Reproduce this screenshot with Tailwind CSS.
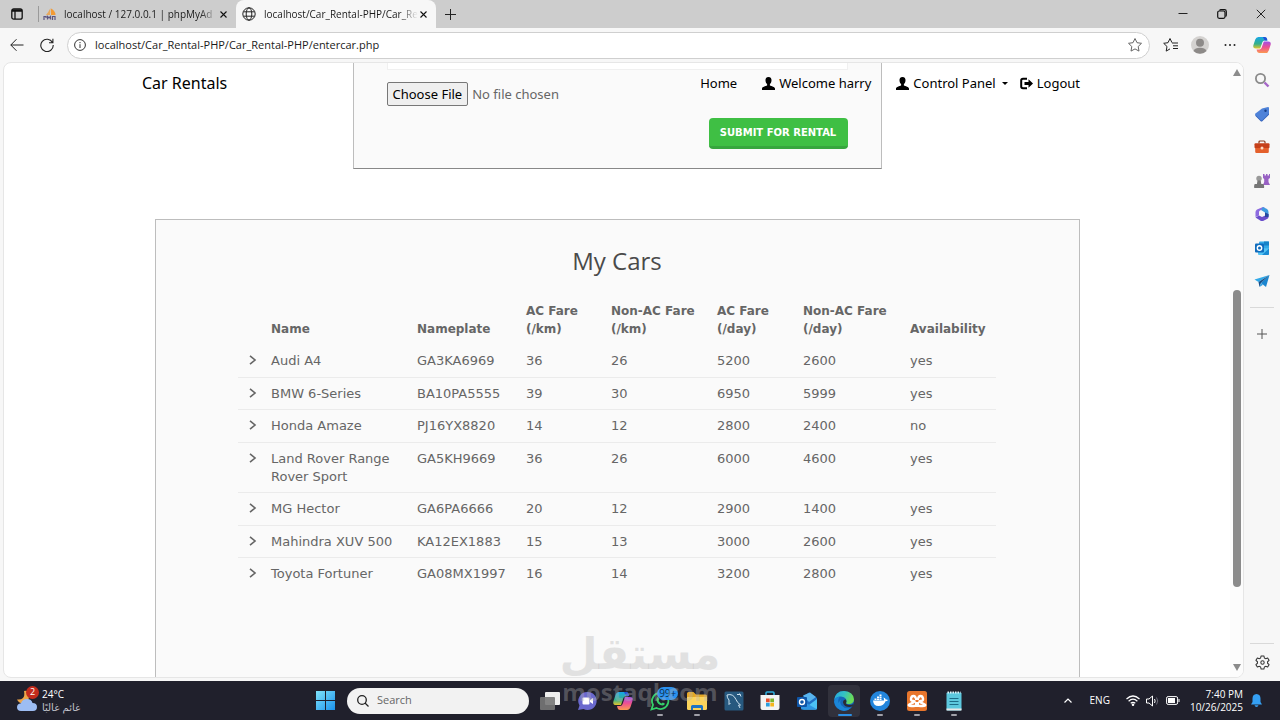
<!DOCTYPE html>
<html lang="en">
<head>
    <meta charset="UTF-8">
    <meta name="viewport" content="width=device-width, initial-scale=1.0">
    <title>Car Rentals</title>
    <script src="https://cdn.jsdelivr.net/npm/@tailwindcss/browser@4"></script>
</head>
<body class="relative flex h-screen flex-col overflow-hidden bg-[#f7f7f7] font-['Open_Sans','Noto_Sans',sans-serif] text-[#1b1b1b]">

    <!-- Tab strip -->
    <div class="flex h-7 shrink-0 bg-[#cdcdcd] text-[10px]">
        <button aria-label="Tab actions" class="flex w-[34px] items-center justify-center">
            <svg class="size-3" viewBox="0 0 12 12" fill="none" stroke="#111" stroke-width="1.3"><rect x=".8" y=".8" width="10.4" height="10.4" rx="2"/><path d="M1 2h10M1 3h10M4 3v8" /></svg>
        </button>
        <div class="my-1.5 ml-1 w-px bg-[#9a9a9a]"></div>
        <div class="flex w-[197px] items-center pl-1">
            <svg class="h-3 w-3.5 shrink-0" viewBox="0 0 14 12"><path d="M7.500 0Q5.500 4 3 7h4z" fill="#e8a85c"/><path d="M8 .5Q12.500 3 12.500 7H8z" fill="#f29a35"/><path d="M1 12V8.500h2V10m1.500 1.500v-3L6 10l1.500-1.500v3M9.500 12V8.500H12V12" fill="none" stroke="#5c5580" stroke-width="1.2"/></svg>
            <button class="ml-[7px] w-[154px] overflow-hidden text-left whitespace-nowrap [mask-image:linear-gradient(to_right,black_88%,transparent)]">localhost / 127.0.0.1 | phpMyAd</button>
            <button aria-label="Close tab" class="ml-0.5"><svg class="size-[7px]" viewBox="0 0 7 7" stroke="#111" stroke-width="1.1"><path d="M.5.5l6 6m0-6l-6 6"/></svg></button>
        </div>
        <div class="flex w-[200px] items-center rounded-t-lg bg-[#f7f7f7] pl-1.5">
            <svg class="size-[14px] shrink-0" viewBox="0 0 14 14" fill="none" stroke="#222"><circle cx="7" cy="7" r="6.200"/><ellipse cx="7" cy="7" rx="2.800" ry="6.200"/><path d="M1.500 4.800h11M1.500 9.200h11"/></svg>
            <button class="ml-2 w-[154px] overflow-hidden text-left whitespace-nowrap [mask-image:linear-gradient(to_right,black_88%,transparent)]">localhost/Car_Rental-PHP/Car_Re</button>
            <button aria-label="Close tab" class="ml-0.5"><svg class="size-[7px]" viewBox="0 0 7 7" stroke="#111" stroke-width="1.1"><path d="M.5.5l6 6m0-6l-6 6"/></svg></button>
        </div>
        <button aria-label="New tab" class="ml-[9px]"><svg class="size-[11px]" viewBox="0 0 11 11" stroke="#222"><path d="M5.500 0v11M0 5.500h11"/></svg></button>
        <div class="ml-auto flex items-center gap-[29px] pr-[14px]">
            <button aria-label="Minimize"><svg class="size-[10px]" viewBox="0 0 10 10" stroke="#222"><path d="M.5 4.500h9"/></svg></button>
            <button aria-label="Restore"><svg class="size-[10px]" viewBox="0 0 10 10" fill="none" stroke="#111" stroke-width="1.2"><rect x=".7" y="2" width="7.300" height="7.300" rx="1.500"/><path d="M2.500 1.500Q3 .7 4 .7h3.500q1.800 0 1.800 1.800V6q0 1-.8 1.500"/></svg></button>
            <button aria-label="Close"><svg class="size-[10px]" viewBox="0 0 10 10" stroke="#222"><path d="M.8.8l8.400 8.400m0-8.400L.8 9.200"/></svg></button>
        </div>
    </div>

    <!-- Address bar -->
    <div class="flex h-[34px] shrink-0 items-center pr-[9px] pl-2.5">
        <button aria-label="Back"><svg class="size-[14px]" viewBox="0 0 14 14" fill="none" stroke="#222"><path d="M13.500 7H.8M6.500 1.200L.8 7l5.700 5.800"/></svg></button>
        <button aria-label="Refresh" class="ml-4"><svg class="size-[14px]" viewBox="0 0 14 14" fill="none" stroke="#222" stroke-width="1.1"><path d="M12.500 4.500A6.200 6.200 0 1 0 13.200 7M12.900.8v3.900H9"/></svg></button>
        <div class="ml-[13px] flex h-[27px] flex-1 items-center rounded-full border border-[#cfcfcf] bg-white px-1.5">
            <svg class="size-3 shrink-0" viewBox="0 0 12 12" fill="none" stroke="#333"><circle cx="6" cy="6" r="5.400"/><path d="M6 5.200V9M6 3v1.200"/></svg>
            <input aria-label="Address" class="ml-[9px] min-w-0 flex-1 text-[11px] outline-none" value="localhost/Car_Rental-PHP/Car_Rental-PHP/entercar.php">
            <button aria-label="Add to favorites"><svg class="size-4" viewBox="0 0 16 16" fill="none" stroke="#666" stroke-linejoin="round"><path d="M8 1.500l2 4.200 4.500.6-3.300 3.200.8 4.600L8 11.900l-4 2.200.8-4.600L1.500 6.300 6 5.700z"/></svg></button>
        </div>
        <button aria-label="Favorites" class="ml-[13px]"><svg class="size-4" viewBox="0 0 16 16" fill="none" stroke="#222" stroke-linejoin="round"><path d="M9 5.500h-.1L7 1.500 5 5.700.7 6.300 4 9.500l-.8 4.600L7 11.900M9 6h6M10 8.800h5M10 11.500h5"/></svg></button>
        <button aria-label="Profile" class="ml-3"><svg class="size-[18px]" viewBox="0 0 18 18"><circle cx="9" cy="9" r="9" fill="#d4d2d0"/><circle cx="9" cy="6.800" r="4" fill="#8d8a88"/><path d="M2.500 15Q4 11.800 9 11.800t6.500 3.200A9 9 0 0 1 2.500 15z" fill="#8d8a88"/></svg></button>
        <button aria-label="Settings and more" class="ml-[15px]"><svg class="h-1 w-3" viewBox="0 0 12 4" fill="#222"><circle cx="1.500" cy="2" r="1"/><circle cx="6" cy="2" r="1"/><circle cx="10.500" cy="2" r="1"/></svg></button>
        <button aria-label="Copilot" class="ml-[17px]">
            <svg class="size-[18px]" viewBox="0 0 20 20">
                <defs>
                    <linearGradient id="cpa" x1="0" y1="0" x2="0" y2="1"><stop offset="0" stop-color="#16a6e8"/><stop offset=".6" stop-color="#35b08a"/><stop offset="1" stop-color="#e8c52a"/></linearGradient>
                    <linearGradient id="cpb" x1="0" y1="0" x2="0" y2="1"><stop offset="0" stop-color="#a04ee8"/><stop offset=".5" stop-color="#ee5190"/><stop offset="1" stop-color="#fb9a50"/></linearGradient>
                </defs>
                <path d="M6 1h7q2 0 2.500 2l.5 2h-3q-2 0-2.600 2L8 14H3Q-.6 14 .5 10L2.500 4Q3.500 1 6 1z" fill="url(#cpa)"/>
                <path d="M11 1h2q2 0 2.500 2l.5 2h-3z" fill="#2450d8"/>
                <path d="M14 19H7q-2 0-2.500-2L4 15h3q2 0 2.600-2L12 6h5q3.600 0 2.500 4l-2 6q-1 3-3.500 3z" fill="url(#cpb)"/>
            </svg>
        </button>
    </div>

    <div class="flex min-h-0 flex-1">
        <!-- Web page -->
        <div class="mb-[3px] ml-[3px] flex min-w-0 flex-1 overflow-hidden rounded-lg border border-[#e6e6e6] bg-white font-['DejaVu_Sans',sans-serif] text-[#666]">
            <div class="relative flex min-w-0 flex-1 flex-col items-center">
                <nav class="absolute inset-x-0 top-0 z-10 flex justify-center text-[13px] leading-[18px] text-black font-['Noto_Sans',sans-serif]">
                    <div class="flex w-full max-w-[950px] items-center pt-[11px] pr-3">
                        <a href="#" class="text-base leading-[18px]">Car Rentals</a>
                        <div class="ml-auto flex items-center gap-[25px]">
                            <a href="#">Home</a>
                            <a href="#" class="flex items-center gap-1"><svg class="size-[13px]" viewBox="0 0 13 13"><path d="M6.500 0c2.200 0 3.200 1.500 3 3.600-.1 1.600-.8 2.900-1.600 3.500v1.300c1.500.7 5.100 1.300 5.100 3.200V13H0v-1.400c0-1.900 3.600-2.500 5.100-3.200V7.100C4.300 6.500 3.600 5.200 3.500 3.600 3.300 1.500 4.300 0 6.500 0z"/></svg>Welcome harry</a>
                            <div class="flex items-center gap-3">
                                <a href="#" class="flex items-center gap-1"><svg class="size-[13px]" viewBox="0 0 13 13"><path d="M6.500 0c2.200 0 3.200 1.500 3 3.600-.1 1.600-.8 2.900-1.600 3.500v1.300c1.500.7 5.100 1.300 5.100 3.200V13H0v-1.400c0-1.900 3.600-2.500 5.100-3.200V7.100C4.300 6.500 3.600 5.200 3.500 3.600 3.300 1.500 4.300 0 6.500 0z"/></svg>Control Panel<svg class="ml-0.5 h-[3px] w-1.5" viewBox="0 0 6 3"><path d="M0 0h6L3 3z"/></svg></a>
                                <a href="#" class="flex items-center gap-1"><svg class="size-[13px]" viewBox="0 0 13 13"><path d="M7 1.800H3Q1.200 1.800 1.200 3.500v6q0 1.700 1.800 1.700h4" fill="none" stroke="#000" stroke-width="2"/><path d="M4.500 5H8.500V2.200L13 6.500 8.500 10.800V8h-4z"/></svg>Logout</a>
                            </div>
                        </div>
                    </div>
                </nav>

                <form class="w-full max-w-[529px] border border-t-0 border-[#bdbdbd] border-b-[#888] bg-[#fafafa] px-[33px] pb-[19px]">
                    <div class="h-[7px] border border-t-0 border-[#f0f0f0] bg-white"></div>
                    <input type="file" aria-label="Car image" class="mt-3 block h-6 text-[13px] leading-[18px] font-['Noto_Sans',sans-serif] file:mr-1 file:h-6 file:rounded-xs file:border file:border-solid file:border-[#777] file:bg-[#efefef] file:px-[5px] file:text-[13px] file:text-black">
                    <button type="button" class="mt-3 ml-auto block h-[31px] w-[139px] rounded border-b-3 border-[#37a63e] bg-[#3fbf44] text-[10px] font-bold text-white uppercase">Submit for rental</button>
                </form>

                <section class="mt-[50px] flex w-full max-w-[925px] flex-1 flex-col items-center border border-b-0 border-[#bdbdbd] bg-[#fafafa] pt-[23px]">
                    <h2 class="text-2xl leading-9 text-[#4a4a4a] font-['Open_Sans','Noto_Sans',sans-serif]">My Cars</h2>
                    <table class="mt-[23px] w-full max-w-[758px] table-fixed text-left text-[13px] leading-[18px]">
                        <colgroup>
                            <col class="w-[25px]"><col class="w-[146px]"><col class="w-[109px]"><col class="w-[85px]"><col class="w-[106px]"><col class="w-[86px]"><col class="w-[107px]"><col>
                        </colgroup>
                        <thead class="align-bottom text-[12px] whitespace-nowrap">
                            <tr>
                                <th></th>
                                <th class="px-2 pb-[7px]">Name</th>
                                <th class="px-2 pb-[7px]">Nameplate</th>
                                <th class="px-2 pb-[7px]">AC Fare<br>(/km)</th>
                                <th class="px-2 pb-[7px]">Non-AC Fare<br>(/km)</th>
                                <th class="px-2 pb-[7px]">AC Fare<br>(/day)</th>
                                <th class="px-2 pb-[7px]">Non-AC Fare<br>(/day)</th>
                                <th class="px-2 pb-[7px]">Availability</th>
                            </tr>
                        </thead>
                        <tbody id="carRows" class="align-top"></tbody>
                    </table>
                </section>
            </div>

            <!-- Scrollbar -->
            <div class="flex w-[13px] flex-col items-center bg-[#fcfcfc] py-1.5">
                <svg class="h-[7px] w-2" viewBox="0 0 8 7"><path d="M4 0l4 7H0z" fill="#8b8b8b"/></svg>
                <div class="flex-1 pt-[214px]"><div class="h-[297px] w-2 rounded-full bg-[#8b8b8b]"></div></div>
                <svg class="h-[7px] w-2" viewBox="0 0 8 7"><path d="M0 0h8L4 7z" fill="#8b8b8b"/></svg>
            </div>
        </div>

        <!-- Edge sidebar -->
        <aside class="flex w-9 flex-col items-center pt-2.5">
            <div class="flex h-[217px] flex-col justify-between">
                <button aria-label="Search" class="size-4"><svg viewBox="0 0 16 16" fill="none"><circle cx="6.500" cy="6.500" r="4.600" stroke="#8a8a8a" stroke-width="1.8"/><path d="M10.500 10.500l4 4" stroke="#a566c8" stroke-width="2.400"/></svg></button>
                <button aria-label="Shopping" class="size-4"><svg viewBox="0 0 16 16"><path d="M8 2.500L14 1q1 0 1 1v6l-6.500 6.500q-1 1-2 0l-5-5q-1-1 0-2z" fill="#4e82d8"/><path d="M1.500 9l5 5q1 1 2 0L15 7.500v1.200L8.500 15q-1 1-2 0l-5-5z" fill="#2c5cb8"/><circle cx="11.500" cy="4.800" r="1.200" fill="#173f86"/></svg></button>
                <button aria-label="Tools" class="size-4"><svg viewBox="0 0 16 16"><path d="M5 4.500V3q0-1 1-1h4q1 0 1 1v1.500" fill="none" stroke="#8b3a1c" stroke-width="1.2"/><rect x=".5" y="4.200" width="15" height="5" rx="1" fill="#c6401a"/><path d="M1.200 9h13.600v3.800q0 1.200-1.200 1.200H2.400q-1.200 0-1.200-1.200z" fill="#e4602c"/><circle cx="8" cy="9" r="1.500" fill="#ffd9c2"/></svg></button>
                <button aria-label="Games" class="size-4"><svg viewBox="0 0 16 16"><path d="M9 1h1.500v1.500H12V1h1.500v1.500H15V1h1v4l-1.500 1v3l1.500 3H9l1.200-3V6L9 5z" fill="#9861c4"/><circle cx="5" cy="5.500" r="2.700" fill="#999"/><path d="M3.500 7.500h3.200l.6 3.500H9.500q1 2 .5 4H.3q-.6-2 .4-4h2.200z" fill="#777"/></svg></button>
                <button aria-label="Microsoft 365" class="size-4"><svg viewBox="0 0 16 16"><path d="M9 1L3 3.500Q1.500 4.500 1.500 6v5L5 9.500V6q0-1 1-1.500L11 2z" fill="#8d6be0"/><path d="M9 1l4 2q1.500 1 1.500 3v4L11 11V6.500L7 4z" fill="#3f9be0"/><path d="M14.500 8v3q0 1-1 1.700L9 15H7l-5.500-3.500 3.500-2 3 1.500z" fill="#6a4ecb"/><path d="M11 6.500L14.500 8v3L11 11z" fill="#274a9e"/></svg></button>
                <button aria-label="Outlook" class="size-4"><svg viewBox="0 0 16 16"><rect x="5" y="1.500" width="10" height="8" rx="1" fill="#32a9e7"/><rect x="10" y="1.500" width="5" height="4" fill="#1683c8"/><path d="M4 8l11 .5V14q0 1-1 1H5q-1 0-1-1z" fill="#54c5f5"/><path d="M15 8.500L8 15h6q1 0 1-1z" fill="#1b8bd3"/><rect x="1" y="3.500" width="9" height="9" rx="1" fill="#0f6cbd"/><circle cx="5.500" cy="8" r="2.200" fill="none" stroke="#fff" stroke-width="1.400"/></svg></button>
                <button aria-label="Drop" class="size-4"><svg viewBox="0 0 16 16"><path d="M15.500 2L.5 6.500l4 2.500z" fill="#31a9e8"/><path d="M15.500 2L7 10l5 4z" fill="#1b86d0"/><path d="M4.500 9L15.500 2 7 10l-1.500 4z" fill="#14508c"/><path d="M5.500 14L7 10l2 1.800z" fill="#2f9fe0"/></svg></button>
            </div>
            <div class="mt-[18px] h-px w-6 bg-[#d9d9d9]"></div>
            <button aria-label="Customize" class="mt-[21px]"><svg class="size-[10px]" viewBox="0 0 10 10" stroke="#555"><path d="M5 0v10M0 5h10"/></svg></button>
            <div class="mt-auto h-px w-6 bg-[#d9d9d9]"></div>
            <button aria-label="Settings" class="mt-[11px] mb-[11px]"><svg class="size-[15px]" viewBox="0 0 16 16" fill="none" stroke="#333" stroke-width="1.100" stroke-linejoin="round"><path d="M6.500 1h3l.5 2.200 1.300.7 2.200-.7 1.500 2.500L13.400 7.200v1.600L15 10.300l-1.500 2.500-2.200-.7-1.300.7L9.500 15h-3L6 12.800l-1.300-.7-2.200.7L1 10.300l1.600-1.500V7.200L1 5.700l1.500-2.500 2.200.7L6 3.200z"/><circle cx="8" cy="8" r="1.800"/></svg></button>
        </aside>
    </div>

    <!-- Taskbar -->
    <footer class="flex h-[39px] shrink-0 items-center bg-[#20202c] text-white">
        <div class="flex flex-1 basis-0 items-center pl-4">
            <div class="relative">
                <svg class="h-[22px] w-[22px]" viewBox="0 0 22 22"><path d="M8 1q1 5-1 7t-6 1.500Q3 14 8 13t5-7-5-5z" fill="#eda64a"/><path d="M5 21q-4-.3-4-3.800t4-4Q6.500 9 11 9t5.500 4q4.500 0 4.500 4t-4 4z" fill="#9dbdf3"/></svg>
                <span class="absolute -top-1 left-2.5 flex size-[13px] items-center justify-center rounded-full bg-[#c42b1c] text-[9px]">2</span>
            </div>
            <div class="ml-1 text-[10px] leading-[13px]">
                <p>24°C</p>
                <p lang="ar" dir="rtl" class="text-[10px] text-[#c4c4cc] font-['DejaVu_Sans',sans-serif]">غائم غالبًا</p>
            </div>
        </div>

        <div class="flex items-center pl-0.5">
            <button aria-label="Start"><svg class="size-[19px]" viewBox="0 0 19 19"><defs><linearGradient id="win" x1="0" y1="0" x2="1" y2="1"><stop offset="0" stop-color="#7fe3fb"/><stop offset="1" stop-color="#1b92ea"/></linearGradient></defs><path d="M0 0h9v9H0zM10 0h9v9h-9zM0 10h9v9H0zM10 10h9v9h-9z" fill="url(#win)"/></svg></button>
            <div class="ml-3 flex h-[26px] w-[182px] items-center rounded-full bg-[#f2f2f2] pl-2.5">
                <svg class="size-3 shrink-0" viewBox="0 0 12 12" fill="none" stroke="#222" stroke-width="1.300"><circle cx="5" cy="5" r="4.300"/><path d="M8 8l3.500 3.500"/></svg>
                <input aria-label="Search" placeholder="Search" class="ml-2 w-32 text-[11px] outline-none placeholder:text-[#666]">
            </div>
            <div class="ml-[11px] flex w-[424px] items-center justify-between">
                <button aria-label="Task view" class="size-5"><svg viewBox="0 0 20 20"><rect x="5" y="1" width="15" height="13" rx="1" fill="#eee"/><rect x="0" y="6" width="15" height="13" rx="1" fill="#777" fill-opacity=".9"/></svg></button>
                <button aria-label="Chat" class="size-5"><svg viewBox="0 0 20 20"><path d="M10.500 1a9 9 0 1 1-4 17L1 19l1.500-4.500A9 9 0 0 1 10.500 1z" fill="#6a69ce"/><rect x="5.500" y="6.500" width="7" height="7" rx="1" fill="#fff"/><path d="M13 9l3-2v6l-3-2z" fill="#fff"/></svg></button>
                <button aria-label="Copilot" class="size-5"><svg viewBox="0 0 20 20"><path d="M6 1h7q2 0 2.500 2l.5 2h-3q-2 0-2.600 2L8 14H3Q-.6 14 .5 10L2.500 4Q3.500 1 6 1z" fill="url(#cpa)"/><path d="M11 1h2q2 0 2.500 2l.5 2h-3z" fill="#2450d8"/><path d="M14 19H7q-2 0-2.500-2L4 15h3q2 0 2.600-2L12 6h5q3.600 0 2.500 4l-2 6q-1 3-3.500 3z" fill="url(#cpb)"/></svg></button>
                <button aria-label="WhatsApp" class="relative size-5">
                    <svg viewBox="0 0 20 20" fill="none"><path d="M10.500 2a8 8 0 1 1-4 15L1.500 18.500 3 13.800A8 8 0 0 1 10.500 2z" stroke="#35d06a" stroke-width="1.800"/><path d="M7 6.500q1-1 1.600.2L9.300 8.500l-.7 1.200q1 2 3 2.700l1.200-1 2 1.200q0 2-2.200 2Q7 14 6.300 8.500z" fill="#35d06a"/></svg>
                    <span class="absolute -top-1 left-[7px] rounded-full bg-[#2a90ee] px-0.5 text-[10px] leading-[13px] text-[#10304f]">99+</span>
                    <i class="absolute top-[23px] left-[7px] h-0.5 w-1.5 rounded-full bg-[#a0a0a8]"></i>
                </button>
                <button aria-label="File Explorer" class="relative size-5">
                    <svg viewBox="0 0 20 20"><path d="M0 2.500Q0 1 1.500 1h5L9 3.500h9.500Q20 3.500 20 5v13H0z" fill="#e6a924"/><path d="M0 6h20v11.500q0 1.500-1.500 1.500h-17Q0 19 0 17.500z" fill="#fbd45c"/><path d="M4 19v-3.500Q4 14 5.500 14h9q1.500 0 1.500 1.500V19h-2v-2H6v2z" fill="#1d74c4"/></svg>
                    <i class="absolute top-[23px] left-[7px] h-0.5 w-1.5 rounded-full bg-[#a0a0a8]"></i>
                </button>
                <button aria-label="MySQL Workbench" class="size-5"><svg viewBox="0 0 20 20"><rect x=".5" y=".5" width="19" height="19" rx="1.500" fill="#27597f"/><path d="M3 4q6-2 9 4.500 1 3 4.500 5.500l-2 .2 1.500 2.800M3 4q0 3 2 5v4.500l1.500-1.500M13 3.500h3.500M15.500 2.500l1.500 3" fill="none" stroke="#cfe3f0" stroke-width="1"/></svg></button>
                <button aria-label="Microsoft Store" class="size-5"><svg viewBox="0 0 20 20"><path d="M6 5V2q0-1 1-1h6q1 0 1 1v3" fill="none" stroke="#2fb0e0" stroke-width="1.500"/><path d="M.5 4h19v13q0 2-2 2h-15q-2 0-2-2z" fill="#f4f4f4"/><path d="M6 7.500h3.700v3.700H6z" fill="#e8502e"/><path d="M10.300 7.500H14v3.700h-3.700z" fill="#7cb52c"/><path d="M6 11.800h3.700v3.700H6z" fill="#2a9fe0"/><path d="M10.300 11.800H14v3.700h-3.700z" fill="#f5b51c"/></svg></button>
                <button aria-label="Outlook" class="size-5"><svg viewBox="0 0 20 20"><path d="M4 7l8-5.500L20 7v10q0 1.500-1.500 1.500h-13Q4 18.500 4 17z" fill="#1f6fc4"/><path d="M6 4.500L13 1.500l6 4.500-7 5z" fill="#58b4ee"/><path d="M20 8v9q0 1.500-1.500 1.500H6z" fill="#4cc2f5"/><path d="M4 9l15.500 9q-.5.500-1 .5h-13Q4 18.500 4 17z" fill="#2f96e2"/><rect x="0" y="6" width="10" height="10" rx="1" fill="#0f56a8"/><circle cx="5" cy="11" r="2.500" fill="none" stroke="#fff" stroke-width="1.400"/></svg></button>
                <button aria-label="Microsoft Edge" class="relative flex h-8 w-5 items-center">
                    <span class="absolute -inset-x-1.5 inset-y-0 rounded bg-white/8"></span>
                    <svg class="relative size-5" viewBox="0 0 20 20"><defs><linearGradient id="edg" x1="0" y1="0" x2="1" y2=".3"><stop offset="0" stop-color="#24a5e4"/><stop offset=".55" stop-color="#35c3c0"/><stop offset="1" stop-color="#6bdc55"/></linearGradient></defs><circle cx="10" cy="10" r="10" fill="#1566b8"/><path d="M0 9.500Q1 0 10 0q9.500.5 10 8.500-.3 4.300-5 4.500-3 0-3-1.500 1-1.500 0-3.500Q10.500 5.500 7 5.500 2 5.500 0 9.500z" fill="url(#edg)"/><path d="M7.500 8Q5 11 7.500 14.500q3.500 4 9.500 2.300Q14 20 10 20 2 19 .1 11 1 6 6 5.500 3.500 8 4.500 12 6 9 7.500 8z" fill="#1b86d8"/><path d="M12 8.500q-3 0-3 3 1 4.500 6.500 4.500 1.500 0 3-.8l1.300-2.500q-2 1.300-5 1.200-3-.2-3-1.600 1.200-1.600.2-3.800z" fill="#2b2b36"/></svg>
                    <i class="absolute top-[29px] left-1 h-0.5 w-3.5 rounded-full bg-[#2b8fe6]"></i>
                </button>
                <button aria-label="Docker" class="relative size-5">
                    <svg viewBox="0 0 20 20"><circle cx="10" cy="10" r="10" fill="#2285dc"/><path d="M3 9.500h11q.2-1.700-.6-3Q15.500 7 15.700 8.500q1.300-.2 2.300.5-.8 1.300-2.500 1.300Q14 15 8.500 15 3.500 15 3 9.500z" fill="#fff"/><path d="M4.500 7.500h2v1.500h-2zM7 7.500h2v1.500H7zM9.500 7.500h2v1.500h-2zM7 5.500h2V7H7zM9.500 5.500h2V7h-2zM9.500 3.500h2V5h-2z" fill="#fff"/></svg>
                    <i class="absolute top-[23px] left-[7px] h-0.5 w-1.5 rounded-full bg-[#a0a0a8]"></i>
                </button>
                <button aria-label="XAMPP" class="relative size-5">
                    <svg viewBox="0 0 20 20"><rect width="20" height="20" rx="2.500" fill="#e8762c"/><path d="M8.500 7.500Q8.500 5 6.500 5T4 7.500 6.500 10 4 12.500 6.500 15t2-2.500M11.500 7.500Q11.500 5 13.500 5T16 7.500 13.500 10t2.500 2.500-2.500 2.500-2-2.500M8 7.800h4M8 12.200h4" fill="none" stroke="#fff" stroke-width="2.400"/></svg>
                    <i class="absolute top-[23px] left-[7px] h-0.5 w-1.5 rounded-full bg-[#a0a0a8]"></i>
                </button>
                <button aria-label="Notepad" class="relative size-5">
                    <svg viewBox="0 0 20 20"><rect x="2.500" y="1.500" width="15" height="18" rx="1" fill="#5cc8de"/><path d="M2.500 17.500h15v2h-15z" fill="#e8e8e8"/><path d="M5.500 7.500h9M5.500 10.500h9M5.500 13.500h9" stroke="#1c6c88" stroke-width="1.200"/><path d="M3.500 1.500h13" stroke="#dff4fa" stroke-width="2" stroke-dasharray="1.500 1"/></svg>
                    <i class="absolute top-[23px] left-[7px] h-0.5 w-1.5 rounded-full bg-[#a0a0a8]"></i>
                </button>
            </div>
        </div>

        <div class="flex flex-1 basis-0 items-center justify-end pr-[18px]">
            <button aria-label="Show hidden icons"><svg class="h-[5px] w-2" viewBox="0 0 8 5" fill="none" stroke="#fff" stroke-width="1.200"><path d="M.5 4.500L4 1l3.500 3.500"/></svg></button>
            <span class="ml-[18px] text-[10px]">ENG</span>
            <svg class="ml-4 h-[11px] w-[14px]" viewBox="0 0 14 11" fill="none" stroke="#fff" stroke-width="1.200"><path d="M.5 4q6.500-6 13 0M2.600 6.200q4.400-4 8.800 0M4.700 8.300q2.300-2 4.600 0"/><circle cx="7" cy="9.700" r=".7" fill="#fff"/></svg>
            <svg class="ml-1.5 h-3 w-[13px]" viewBox="0 0 13 12" fill="none" stroke="#fff"><path d="M.5 4h2.500L6.500 1v10L3 8H.5z"/><path d="M8.500 4q1.300 2 0 4"/><path d="M10.500 2.500q2.500 3.500 0 7" stroke="#6c6c78"/></svg>
            <svg class="ml-[7px] h-[9px] w-[14px]" viewBox="0 0 14 9"><rect x=".6" y=".6" width="11" height="7.800" rx="1.500" fill="none" stroke="#fff"/><path d="M2 2h7v5H2zM12.500 3h1v3h-1z" fill="#fff"/></svg>
            <div class="ml-2.5 text-right text-[10px] leading-[13px]">
                <p>7:40 PM</p>
                <p>10/26/2025</p>
            </div>
            <button aria-label="Notifications" class="ml-2"><svg class="h-[13px] w-[11px]" viewBox="0 0 11 13" fill="#35a0f4"><path d="M5.500 0q4 .3 4 4.500V8L11 10.500H0L1.500 8V4.500q0-4.200 4-4.500zM3.500 11.300h4q-.5 1.700-2 1.700t-2-1.700z"/></svg></button>
        </div>
    </footer>

    <!-- Watermark -->
    <div class="pointer-events-none absolute inset-x-0 bottom-0 z-20 flex flex-col items-center font-bold text-[#b4b4b4]/35">
        <p lang="ar" dir="rtl" class="text-[44px] leading-[44px] font-['DejaVu_Sans',sans-serif]">مستقل</p>
        <p class="pb-3 text-2xl leading-8 font-['Open_Sans',sans-serif]">mostaql.com</p>
    </div>

    <script>
        // name, nameplate, AC/km, non-AC/km, AC/day, non-AC/day, available
        const cars = [
            ["Audi A4", "GA3KA6969", 36, 26, 5200, 2600, "yes"],
            ["BMW 6-Series", "BA10PA5555", 39, 30, 6950, 5999, "yes"],
            ["Honda Amaze", "PJ16YX8820", 14, 12, 2800, 2400, "no"],
            ["Land Rover Range Rover Sport", "GA5KH9669", 36, 26, 6000, 4600, "yes"],
            ["MG Hector", "GA6PA6666", 20, 12, 2900, 1400, "yes"],
            ["Mahindra XUV 500", "KA12EX1883", 15, 13, 3000, 2600, "yes"],
            ["Toyota Fortuner", "GA08MX1997", 16, 14, 3200, 2800, "yes"]
        ];

        const carRows = document.getElementById('carRows');
        cars.forEach(car => {
            const cells = car.map(value => `<td class="px-2">${value}</td>`).join('');
            carRows.insertAdjacentHTML('beforeend', `
                <tr class="border-b border-[#ebebeb] last:border-0 odd:[&>td]:py-[7px] even:[&>td]:pt-[7px] even:[&>td]:pb-1.5">
                    <td class="pl-[11px]"><svg class="mt-[3px] h-[10px] w-2" viewBox="0 0 8 10" fill="none" stroke="#666" stroke-width="1.6"><path d="M1 .8L6 5 1 9.200"/></svg></td>
                    ${cells}
                </tr>
            `);
        });
    </script>
</body>
</html>
